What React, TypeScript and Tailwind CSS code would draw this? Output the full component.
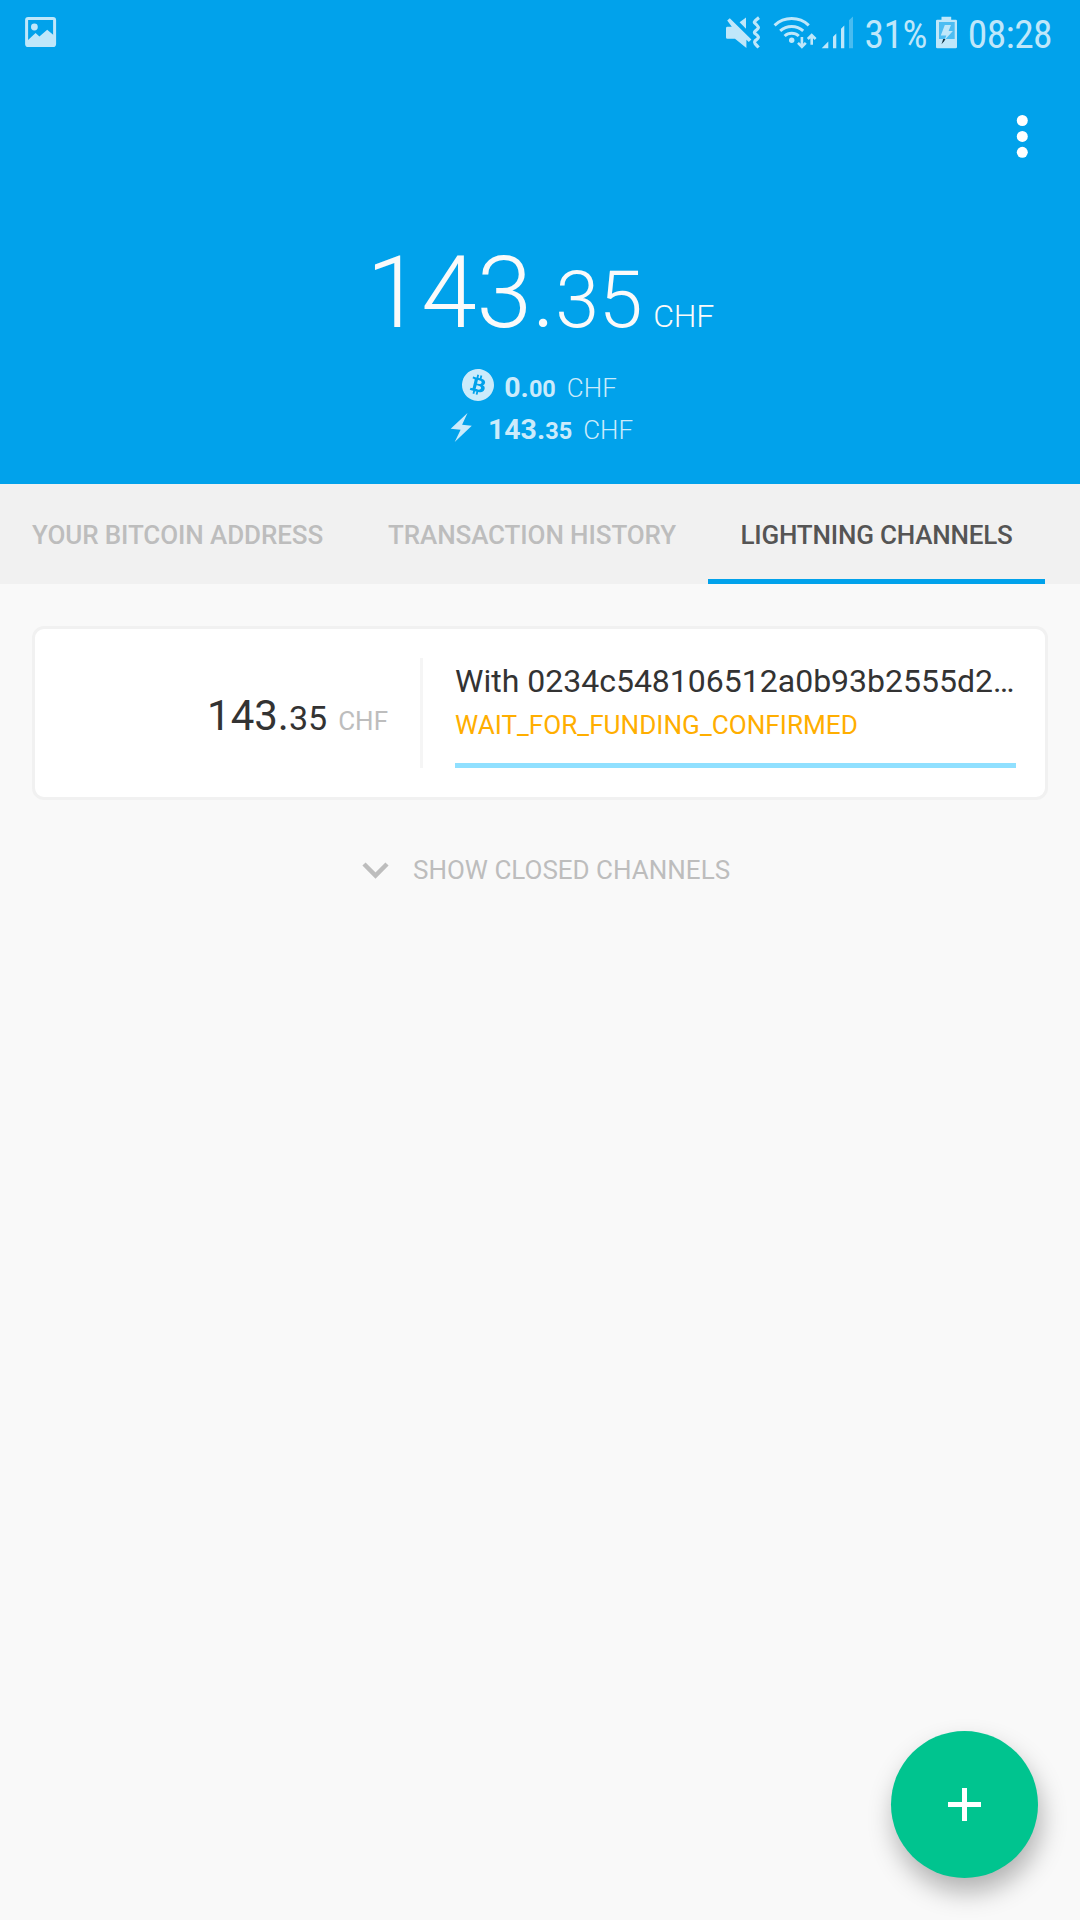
import type { ReactNode } from 'react';
import { SiBitcoin } from 'react-icons/si';

function PictureIcon() {
  return (
    <svg width="32" height="32" viewBox="25 17 32 32" fill="none">
      <rect x="26.6" y="18.5" width="28" height="27" rx="1.6" stroke="currentColor" strokeWidth="3" />
      <circle cx="34.4" cy="27" r="3.4" fill="currentColor" />
      <path d="M27.5 40.5L35.6 33l3.8 3.6 7.8-6.8 6.8 5.6V46H27.5z" fill="currentColor" />
    </svg>
  );
}

function MuteVibrateIcon() {
  return (
    <svg width="36" height="34" viewBox="725 16 36 34" fill="none">
      <path d="M726 28.2q0-1.4 1.4-1.4h4.4l-4.6-6.2 2.6-2.4 21.6 21.4-2.6 2.4-2.4-2.2v8.2L735 38.8h-7.6q-1.4 0-1.4-1.4z" fill="currentColor" />
      <path d="M746 17.4v11.4l-6.4-6.6z" fill="currentColor" />
      <path d="M759 17.6q-5.4 4-4.6 5 4 3.8 4 5t-3.4 3.7q-1 1.2 0 2.2 3.4 2.5 3.4 3.7t-3.4 3.7q-1 1.4 0 2.6 1 1.2 3.6 4" stroke="currentColor" strokeWidth="3.2" />
    </svg>
  );
}

function WifiIcon() {
  return (
    <svg width="44" height="34" viewBox="773 16 44 34" fill="none" stroke="currentColor">
      <path d="M774.6 25.3a25 25 0 0 1 34.2 0M780.2 30.9a17 17 0 0 1 23 0M784.6 36a10.5 10.5 0 0 1 14.2 0" strokeWidth="3" />
      <circle cx="791.7" cy="40.2" r="2.7" fill="currentColor" stroke="none" />
      <path d="M801.9 37v9.6M798 42.8l3.9 4 3.9-4M811.7 44.8v-9.6M807.8 39l3.9-4 3.9 4" strokeWidth="2.6" />
    </svg>
  );
}

function SignalIcon() {
  return (
    <svg width="33" height="34" viewBox="821 16 33 34" fill="currentColor">
      <path d="M821.7 48.2l6.6-6.6v6.6zM833 36.7l3.3-3.2v14.7H833zM841 28.7l3.3-3.2v22.7H841z" />
      <path d="M849 20.2l4-3.8v31.8h-4z" opacity="0.38" />
    </svg>
  );
}

function BatteryIcon() {
  return (
    <svg width="23" height="34" viewBox="935 16 23 34">
      <path d="M941.5 16.8h9.7v2.9h4.6q1.2 0 1.2 1.2v26q0 1.4-1.4 1.4h-18.2q-1.4 0-1.4-1.4v-26q0-1.2 1.2-1.2h4.3z" fill="currentColor" />
      <path d="M939 22h15.7v17H939z" fill="#4dbdf2" />
      <path d="M944.8 25h6.2l-2.4 5.9h4.3l-8.7 9.6 2.2-4.9h-5.6z" fill="currentColor" />
      <path d="M945.5 39h-2.3l-1.7 5.3 2.6-3z" fill="#12303f" />
    </svg>
  );
}

function MoreIcon() {
  return (
    <svg width="12" height="44" viewBox="0 0 12 44" fill="#fff">
      <circle cx="6.3" cy="6.5" r="5.5" />
      <circle cx="6.3" cy="22.4" r="5.5" />
      <circle cx="6.3" cy="38.3" r="5.5" />
    </svg>
  );
}

function BoltIcon() {
  return (
    <svg width="32" height="32" viewBox="445.5 411 32 32" fill="currentColor">
      <path d="M467 413l-16.8 15.8 9.9 1-5.9 12.2 17.1-16.2-9.7-1z" />
    </svg>
  );
}

function Balance({ icon, whole, cents }: { icon: ReactNode; whole: string; cents: string }) {
  return (
    <div className="flex h-[42px] items-center justify-center text-[28.5px] leading-[42px] text-[#cbebfb]">
      <span className="-mt-1.5">{icon}</span>
      <div className="mr-px ml-[10px] whitespace-nowrap">
        <span className="font-bold">{whole}.</span>
        <span className="text-[23.5px] leading-none font-bold">{cents}</span>
        <span className="ml-[11px] text-[26px] leading-none font-light">CHF</span>
      </div>
    </div>
  );
}

export default function App() {
  return (
    <div className="relative flex h-[1920px] w-[1080px] flex-col overflow-hidden bg-[#f9f9f9] font-[Roboto,sans-serif]">
      <header className="h-[484px] bg-[#01a2eb]">
        <div className="flex h-16 items-center pt-0.5 pr-7 pl-[25px] text-[39.5px] leading-none text-[#bfe7fa]">
          <PictureIcon />
          <div className="ml-auto flex items-center font-['Roboto_Condensed',Roboto,sans-serif] tracking-[-0.6px]">
            <MuteVibrateIcon />
            <span className="ml-3"><WifiIcon /></span>
            <span className="ml-1"><SignalIcon /></span>
            <span className="ml-[11px] pt-[3px]">31%</span>
            <span className="ml-2"><BatteryIcon /></span>
            <span className="ml-2.5 pt-[3px]">08:28</span>
          </div>
        </div>
        <div className="flex h-[169px] justify-end pt-[50px] pr-[52px]">
          <MoreIcon />
        </div>
        <div className="h-[120px] text-center text-[100px] leading-[120px] font-light tracking-[-0.3px] text-[#fafafa]">
          143.<span className="text-[79px] leading-none">35</span>
          <span className="ml-[11px] inline-block text-[32px] leading-none">CHF</span>
        </div>
        <div className="pt-3.5">
          <Balance icon={<SiBitcoin size={32} />} whole="0" cents="00" />
          <Balance icon={<BoltIcon />} whole="143" cents="35" />
        </div>
      </header>

      <nav className="flex h-[100px] bg-[#f1f1f1] text-[26px] leading-[102px] font-medium tracking-[-0.1px] whitespace-nowrap text-[#bdbdbd]">
        <div className="w-[356px] pl-8">YOUR BITCOIN ADDRESS</div>
        <div className="w-[352px] pl-8">TRANSACTION HISTORY</div>
        <div className="w-[337px] border-b-5 border-[#01a2eb] text-center tracking-[-0.2px] text-[#555]">LIGHTNING CHANNELS</div>
      </nav>

      <main className="flex flex-col px-8 pt-[42px]">
        <section className="flex h-[174px] rounded-[12px] border-3 border-[#f1f1f1] bg-white p-[29px]">
          <div className="w-[356px] pt-[3px] pr-8 text-right text-[42px] leading-[110px] text-[#333]">
            143.<span className="text-[34px] leading-none">35</span>
            <span className="ml-[11px] inline-block text-[26px] leading-none text-[#bdbdbd]">CHF</span>
          </div>
          <div className="mr-8 w-[3px] bg-[#f5f5f5]" />
          <div className="min-w-0 flex-1 whitespace-nowrap">
            <div className="text-[32px] leading-[46px] text-[#333]">With 0234c548106512a0b93b2555d2…</div>
            <div className="text-[26.15px] leading-[42px] text-[#ffae00]">WAIT_FOR_FUNDING_CONFIRMED</div>
            <div className="mt-[17px] h-[5px] bg-[#90e0ff]" />
          </div>
        </section>
        <button className="mt-[49px] flex h-[42px] items-center pl-[330px] text-[26px] leading-[42px] text-[#bdbdbd]">
          <svg width="27" height="17" viewBox="0 0 27 17" fill="none" stroke="currentColor" strokeWidth="4.5">
            <path d="M2 2l11.5 11.5L25 2" />
          </svg>
          <span className="ml-6">SHOW CLOSED CHANNELS</span>
        </button>
      </main>

      <button className="absolute top-[1731px] left-[891px] flex size-[147px] items-center justify-center rounded-full bg-[#00c48f] shadow-[3px_14px_26px_rgba(0,0,0,0.29)]">
        <svg width="33" height="33" viewBox="0 0 33 33" stroke="#fff" strokeWidth="5">
          <path d="M16.5 0v33M0 16.5h33" />
        </svg>
      </button>
    </div>
  );
}
